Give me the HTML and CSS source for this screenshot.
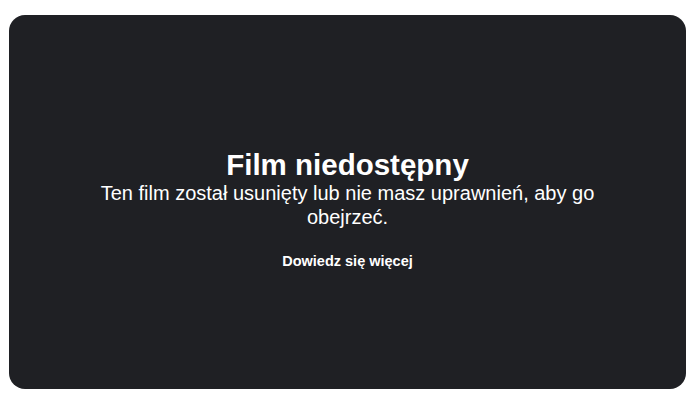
FILE: index.html
```html
<html>
<head>
    <title>Film niedostępny</title>
    <meta charset="UTF-8">
    <link rel="stylesheet" href="styles.css">
</head>
<body>
    <div class="player-error">
        <div class="error-content">
            <h1>Film niedostępny</h1>
            <p>Ten film został usunięty lub nie masz uprawnień, aby go obejrzeć.</p>
            <a class="more-link" href="#">Dowiedz się więcej</a>
        </div>
    </div>
</body>
</html>
```

FILE: styles.css
```css
body {
    margin: 0;
    padding: 15px 9px 18px 9px;
    background: #ffffff;
    font-family: 'Liberation Sans', Arial, sans-serif;
}

.player-error {
    background: #1f2024;
    border-radius: 16px;
    height: 374px;
    display: flex;
    align-items: center;
    justify-content: center;
    color: #ffffff;
    text-align: center;
}

.error-content {
    max-width: 520px;
    margin-top: 13px;
}

.error-content h1 {
    font-size: 29.5px;
    font-weight: 700;
    margin: 0;
    line-height: 1.15;
}

.error-content p {
    font-size: 20px;
    margin: 0;
    line-height: 1.2;
}

.more-link {
    display: inline-block;
    margin-top: 24px;
    font-size: 14.5px;
    font-weight: 700;
    color: #ffffff;
    text-decoration: none;
}
```
